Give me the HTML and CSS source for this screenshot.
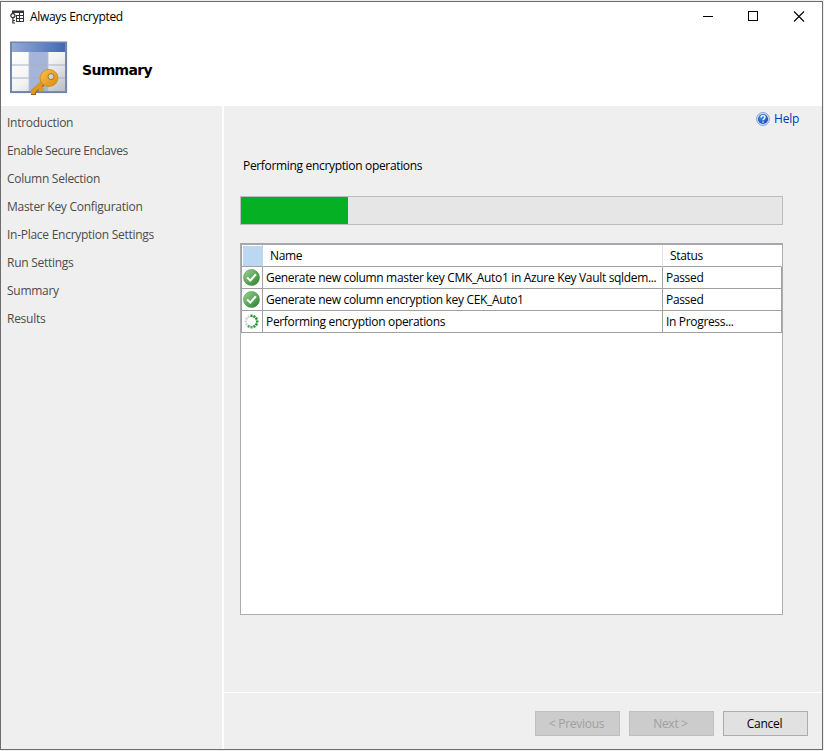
FILE: index.html
```
<!DOCTYPE html>
<html lang="en">
<head>
<meta charset="utf-8">
<title>Always Encrypted</title>
<link rel="stylesheet" href="styles.css">
</head>
<body>
<svg width="0" height="0" class="defs" aria-hidden="true">
  <defs>
    <linearGradient id="green" x1="0" y1="0" x2="1" y2="1"><stop offset="0" stop-color="#a0d49c"/><stop offset=".5" stop-color="#5dab59"/><stop offset="1" stop-color="#347a34"/></linearGradient>
    <linearGradient id="head" x1="0" x2="1"><stop offset="0" stop-color="#93a9d8"/><stop offset="1" stop-color="#4269b5"/></linearGradient>
    <linearGradient id="cell" x1="0" y1="0" x2="1" y2="1"><stop offset="0" stop-color="#fff"/><stop offset=".5" stop-color="#f3f3f4"/><stop offset="1" stop-color="#bcbec4"/></linearGradient>
    <linearGradient id="gold" x1="0" y1="0" x2="1" y2="1"><stop offset="0" stop-color="#fbc04c"/><stop offset="1" stop-color="#d98b0e"/></linearGradient>
    <radialGradient id="blue" cx=".4" cy=".3" r=".8"><stop offset="0" stop-color="#4c90ee"/><stop offset="1" stop-color="#1142a8"/></radialGradient>
    <symbol id="check" viewBox="0 0 17 17">
      <circle cx="8.5" cy="8.5" r="8" fill="url(#green)" stroke="#4a8f4b" stroke-width=".6"/>
      <path d="M4.2 8.6 7.3 11.6 12.9 5.2" fill="none" stroke="#fff" stroke-width="2.1"/>
    </symbol>
  </defs>
</svg>
<div class="window">
  <header>
    <div class="titlebar">
      <svg class="app-icon" width="15" height="14" viewBox="0 0 15 14" fill="none" stroke="#333">
        <path d="M2 .5H14V3H2Z" fill="#333" stroke="none"/>
        <path d="M6 5.5H14M6 8.5H14M6 11.5H14M13.5 1V12M9.5 3V12M6.5 5V12" stroke-width="1"/>
        <circle cx="2.9" cy="5.6" r="2.1" stroke-width="1.3"/>
        <path d="M2.9 7.5V13.5M3 10.5H5M3 13H5" stroke-width="1.2"/>
      </svg>
      <span class="title">Always Encrypted</span>
      <svg class="controls" width="104" height="12" viewBox="0 0 104 12" fill="none" stroke="#000">
        <path d="M0 5.5H10M45.5 .5H54.5V9.5H45.5Z" shape-rendering="crispEdges"/>
        <path d="M91 .5 101 10.5M101 .5 91 10.5" stroke-width="1.1"/>
      </svg>
    </div>
    <div class="banner">
      <svg width="58" height="56" viewBox="0 0 58 56">
        <rect x=".8" y="1.3" width="55.5" height="50" fill="#7c90b7" stroke="#7184a9" stroke-width="1.6"/>
        <rect x="2" y="2" width="53" height="9" fill="url(#head)"/>
        <rect x="2" y="11" width="53" height="39" fill="url(#cell)"/>
        <rect x="19" y="11" width="19" height="39" fill="#a5b4d9"/>
        <path d="M2 24H55M2 37H55" stroke="#a9b1c3"/>
        <path d="M19 11V50M38 11V50" stroke="#b6bfd2" stroke-width=".8"/>
        <path d="M35 40.5 23.5 50.5V54" fill="none" stroke="#8f6523" stroke-width="5"/>
        <path d="M35 39.5 23 50.5V53M29 45.5 33 49.5" fill="none" stroke="#de9820" stroke-width="4"/>
        <ellipse cx="39" cy="37" rx="9" ry="8.5" fill="url(#gold)" stroke="#c98718" stroke-width=".8"/>
        <circle cx="41" cy="35.6" r="3" fill="#d1d4dc" stroke="#af7212"/>
      </svg>
      <h1>Summary</h1>
    </div>
  </header>
  <div class="body">
    <nav>
      <a>Introduction</a><a class="tight">Enable Secure Enclaves</a><a>Column Selection</a><a>Master Key Configuration</a><a>In-Place Encryption Settings</a><a>Run Settings</a><a>Summary</a><a>Results</a>
    </nav>
    <div class="right">
      <main>
        <div class="help">
          <svg width="14" height="14" viewBox="0 0 14 14">
            <circle cx="7" cy="7" r="6.4" fill="#dce9fa" stroke="#6f94cc" stroke-width=".9"/>
            <circle cx="7" cy="7" r="5.1" fill="url(#blue)"/>
            <path d="M5 5.5C5 3 9 3.1 9 5.4 9 6.9 7 6.8 7 8.3M7 9.4V10.8" fill="none" stroke="#fff" stroke-width="1.4"/>
          </svg>
          <span>Help</span>
        </div>
        <p>Performing encryption operations</p>
        <div class="progress"><div class="fill"></div></div>
        <div class="grid">
          <div class="row head"><div class="ic"></div><div class="name">Name</div><div class="status">Status</div></div>
          <div class="row"><div class="ic"><svg width="17" height="17"><use href="#check"/></svg></div><div class="name">Generate new column master key CMK_Auto1 in Azure Key Vault sqldem...</div><div class="status">Passed</div></div>
          <div class="row"><div class="ic"><svg width="17" height="17"><use href="#check"/></svg></div><div class="name">Generate new column encryption key CEK_Auto1</div><div class="status">Passed</div></div>
          <div class="row"><div class="ic"><svg width="17" height="17" viewBox="-8.5 -8.5 17 17" stroke-width="2.2">
            <g stroke="#2c9638"><path d="M0-7V-4.4"/><path d="M0-7V-4.4" transform="rotate(30)"/><path d="M0-7V-4.4" transform="rotate(60)"/><path d="M0-7V-4.4" transform="rotate(90)"/><path d="M0-7V-4.4" transform="rotate(120)"/><path d="M0-7V-4.4" transform="rotate(150)"/></g>
            <g stroke="#55ab5e"><path d="M0-7V-4.4" transform="rotate(180)"/><path d="M0-7V-4.4" transform="rotate(210)"/></g>
            <g stroke="#d5d9d5"><path d="M0-7V-4.4" transform="rotate(240)"/><path d="M0-7V-4.4" transform="rotate(270)"/><path d="M0-7V-4.4" transform="rotate(300)"/><path d="M0-7V-4.4" transform="rotate(330)"/></g>
          </svg></div><div class="name">Performing encryption operations</div><div class="status">In Progress...</div></div>
        </div>
      </main>
      <footer><button disabled>&lt; Previous</button><button disabled>Next &gt;</button><button>Cancel</button></footer>
    </div>
  </div>
</div>
</body>
</html>
```
FILE: styles.css
```
* { box-sizing: border-box; }
body { margin: 0; padding-top: 1px; width: 824px; height: 751px; overflow: hidden; background: #efefef; font: 12px/16px "Open Sans", "Noto Sans", sans-serif; letter-spacing: -.27px; color: #000; }
.defs { position: absolute; }
svg { display: block; flex: none; }
.window { width: 823px; height: 749px; border: 1px solid #6d6d6d; background: #efefef; display: flex; flex-direction: column; }
header { height: 104px; background: #fff; flex: none; }
.titlebar { height: 30px; display: flex; align-items: center; padding: 0 15px 0 9px; }
.title { margin-left: 5px; flex: 1; white-space: nowrap; letter-spacing: -.31px; }
.banner { display: flex; padding: 9px 0 0 9px; }
h1 { margin: 19px 0 0 14px; font: bold 14px/20px "DejaVu Sans", sans-serif; letter-spacing: -.7px; }
.body { flex: 1; display: flex; min-height: 0; }
nav { width: 223px; flex: none; border-right: 2px solid #fff; padding: 3px 0 0 6px; color: #4c4c4c; }
nav a { display: block; height: 28px; line-height: 28px; }
nav .tight { letter-spacing: -.42px; }
.right { flex: 1; display: flex; flex-direction: column; }
main { flex: 1; padding: 5px 39px 0 16px; }
.help { display: flex; justify-content: flex-end; align-items: center; gap: 4px; height: 16px; margin-right: -16px; color: #0038b0; }
p { margin: 31px 0 0 3px; letter-spacing: -.33px; }
.progress { margin-top: 22px; height: 29px; border: 1px solid #bcbcbc; background: #e6e6e6; }
.fill { width: 107px; height: 27px; background: #06b025; }
.grid { margin-top: 18px; height: 372px; border: 1px solid #abadb3; border-top: 2px solid #a6a8ac; background: #fff; letter-spacing: -.33px; }
.row { display: grid; grid-template-columns: 22px 400px 119px; height: 22px; line-height: 21px; }
.row > div { border-right: 1px solid #a0a0a0; border-bottom: 1px solid #a0a0a0; white-space: nowrap; overflow: hidden; padding-left: 3px; }
.row .ic { border-left: 1px solid #a0a0a0; padding: 2px 0 0 1px; }
.row .name { padding-left: 3px; }
.head .ic { background: #bcd8f0; background-clip: padding-box; box-shadow: inset 1px 1px #fff; border-right-color: #bcd8f0; }
.head .name { padding-left: 7px; border-right-color: #e5e5e5; }
.head .status { padding-left: 7px; border-right-color: #fff; }
footer { height: 57px; flex: none; border-top: 1px solid #fff; padding: 18px 14px 0; display: flex; justify-content: flex-end; gap: 9px; }
button { width: 85px; height: 25px; padding: 0 2px 0 0; border: 1px solid #adadad; background: #e1e1e1; font: inherit; letter-spacing: inherit; color: #000; }
button:disabled { border-color: #bfbfbf; background: #ccc; color: #a0a0a0; }
```
